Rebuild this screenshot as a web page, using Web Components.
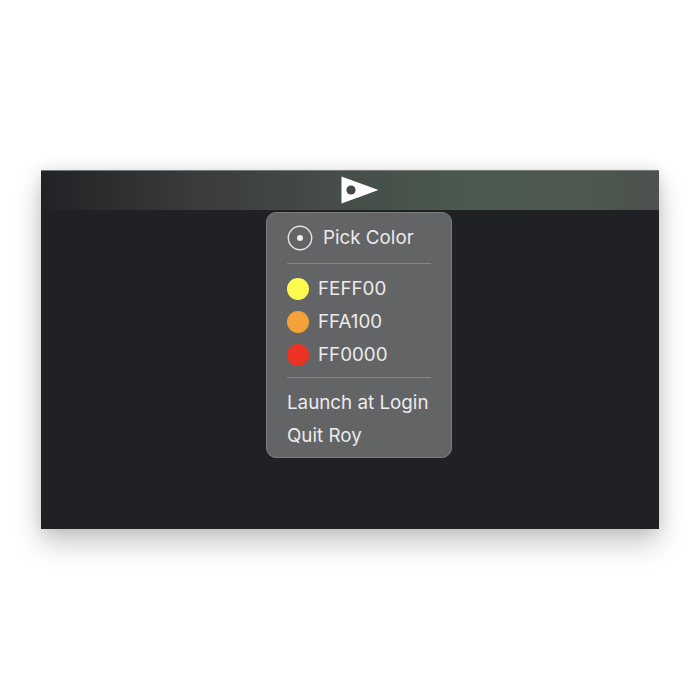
<!DOCTYPE html>
<html>
<head>
<meta charset="utf-8">
<style>
  html, body { margin: 0; background: #fff; }
  body { padding: 170px 41px 0; height: 530px; overflow: hidden; }
</style>
</head>
<body>
<app-window>
  <menu-bar slot="bar"></menu-bar>
  <status-menu>
    <pick-item>Pick Color</pick-item>
    <menu-sep></menu-sep>
    <color-item color="#fdfb4f">FEFF00</color-item>
    <color-item color="#f3a23a">FFA100</color-item>
    <color-item color="#ec3323">FF0000</color-item>
    <menu-sep tight></menu-sep>
    <text-item>Launch at Login</text-item>
    <text-item>Quit Roy</text-item>
  </status-menu>
</app-window>
<script>
class AppWindow extends HTMLElement {
  constructor() {
    super();
    this.attachShadow({ mode: 'open' });
    this.shadowRoot.innerHTML = `
      <style>
        :host {
          display: block;
          width: 618px;
          height: 359px;
          background: #1f2124;
          box-shadow: 0 14px 26px rgba(0, 0, 0, 0.22), 0 0 14px rgba(0, 0, 0, 0.1);
          font-family: Inter, "Liberation Sans", sans-serif;
        }
        .body {
          padding: 2px 0 0 225px;
        }
      </style>
      <slot name="bar"></slot>
      <div class="body"><slot></slot></div>
    `;
  }
}

class MenuBar extends HTMLElement {
  constructor() {
    super();
    this.attachShadow({ mode: 'open' });
    this.shadowRoot.innerHTML = `
      <style>
        :host {
          display: flex;
          align-items: center;
          height: 40px;
          box-sizing: border-box;
          padding-left: 300px;
          border-top: 1px solid #77797a;
          background: linear-gradient(90deg, #202225 0%, #3a3b3c 25%, #454b49 45%, #4a5a4e 70%, #4e5850 85%, #4c524e 100%);
        }
        svg { display: block; margin-top: -1px; }
      </style>
      <svg width="38" height="28" viewBox="0 0 38 28">
        <path d="M0.5 0.5 L37.5 14 L0.5 27.5 Z" fill="#fff"/>
        <circle cx="10" cy="14" r="4.6" fill="#444847"/>
      </svg>
    `;
  }
}

class StatusMenu extends HTMLElement {
  constructor() {
    super();
    this.attachShadow({ mode: 'open' });
    this.shadowRoot.innerHTML = `
      <style>
        :host {
          display: block;
          box-sizing: border-box;
          width: 186px;
          height: 246px;
          padding: 8px 20px 0 20px;
          background: #636466;
          border: 1px solid #7c7d7f;
          border-radius: 10px;
          color: #ebebeb;
          font-size: 18.8px;
        }
      </style>
      <slot></slot>
    `;
  }
}

class PickItem extends HTMLElement {
  constructor() {
    super();
    this.attachShadow({ mode: 'open' });
    this.shadowRoot.innerHTML = `
      <style>
        :host { display: flex; align-items: center; gap: 10px; height: 33px; white-space: nowrap; }
        svg { display: block; flex: none; }
      </style>
      <svg width="26" height="26" viewBox="0 0 26 26">
        <circle cx="13" cy="13" r="11.7" fill="none" stroke="#e6e6e6" stroke-width="1.4"/>
        <circle cx="13" cy="13" r="3" fill="#eee"/>
      </svg>
      <span><slot></slot></span>
    `;
  }
}

class ColorItem extends HTMLElement {
  constructor() {
    super();
    this.attachShadow({ mode: 'open' });
    this.shadowRoot.innerHTML = `
      <style>
        :host { display: flex; align-items: center; gap: 9px; height: 33px; white-space: nowrap; }
        .dot { width: 22px; height: 22px; border-radius: 50%; flex: none; background: var(--dot); }
      </style>
      <div class="dot"></div>
      <span><slot></slot></span>
    `;
  }
  connectedCallback() {
    this.style.setProperty('--dot', this.getAttribute('color'));
  }
}

class TextItem extends HTMLElement {
  constructor() {
    super();
    this.attachShadow({ mode: 'open' });
    this.shadowRoot.innerHTML = `
      <style>
        :host { display: flex; align-items: center; height: 33px; white-space: nowrap; }
      </style>
      <slot></slot>
    `;
  }
}

class MenuSep extends HTMLElement {
  constructor() {
    super();
    this.attachShadow({ mode: 'open' });
    this.shadowRoot.innerHTML = `
      <style>
        :host { display: block; height: 1px; margin: 9px 0 8px; background: #858688; }
        :host([tight]) { margin-top: 6px; }
      </style>
    `;
  }
}

customElements.define('app-window', AppWindow);
customElements.define('menu-bar', MenuBar);
customElements.define('status-menu', StatusMenu);
customElements.define('pick-item', PickItem);
customElements.define('color-item', ColorItem);
customElements.define('text-item', TextItem);
customElements.define('menu-sep', MenuSep);
</script>
</body>
</html>
